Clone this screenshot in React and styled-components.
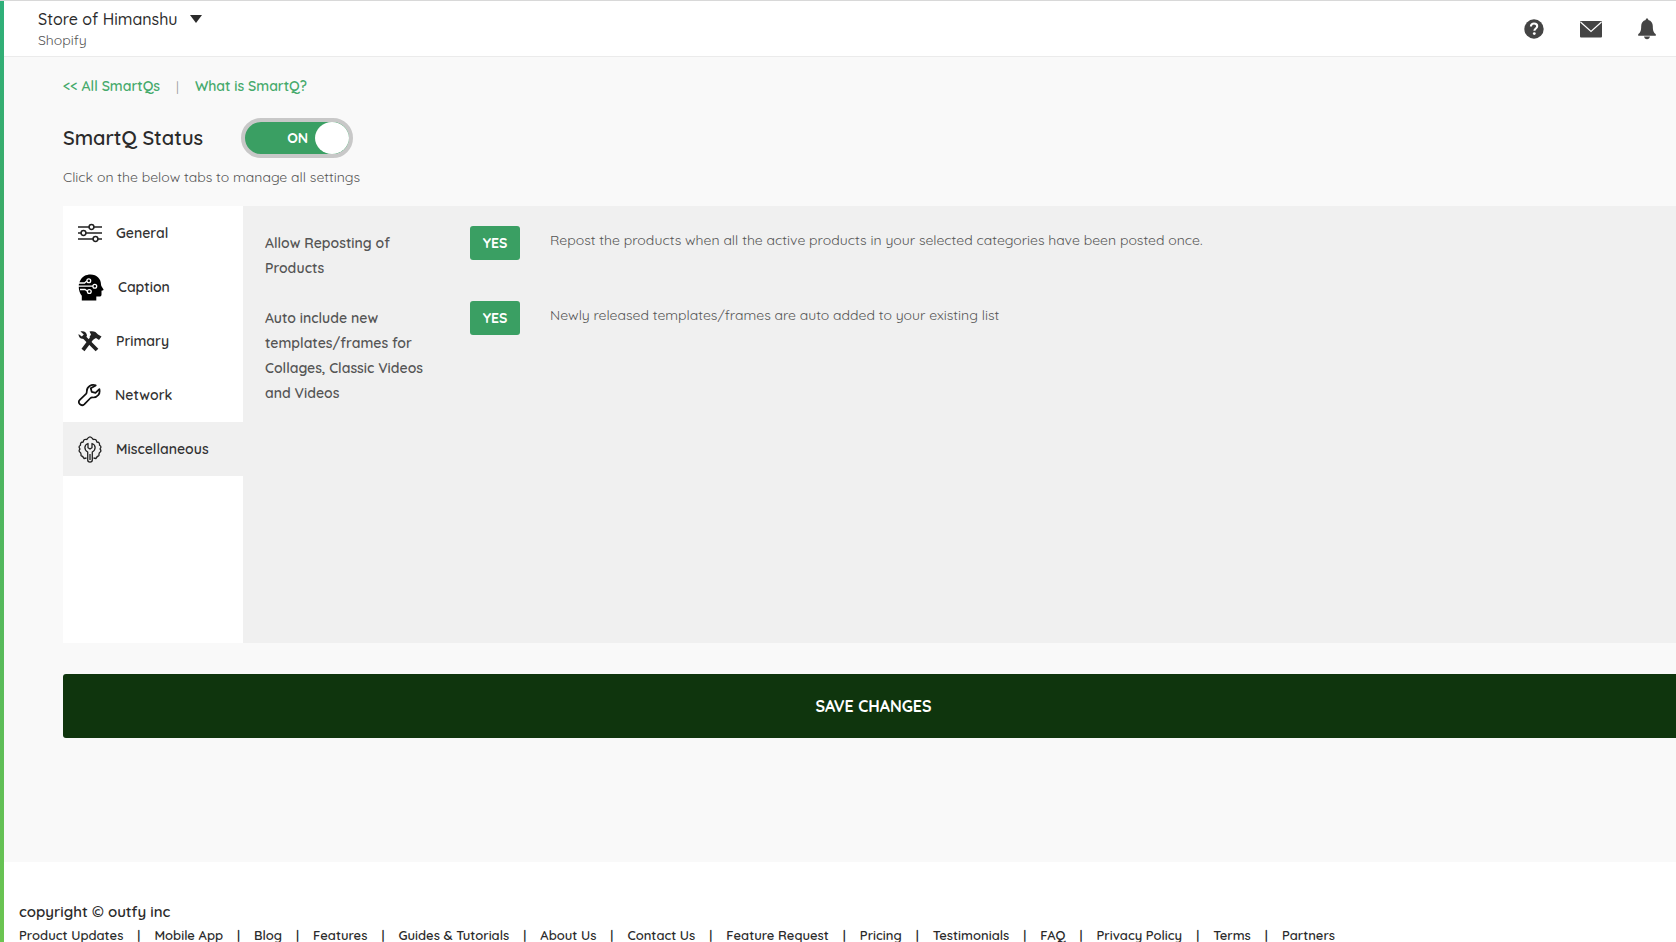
import React, { useState } from "react";
import styled, { createGlobalStyle, css } from "styled-components";

const GlobalStyle = createGlobalStyle`
  * {
    box-sizing: border-box;
  }

  body {
    margin: 0;
    background: #ffffff;
    color: #2b2b2b;
    font-family: Quicksand, "Open Sans", sans-serif;
    font-size: 14px;
  }

  button {
    font-family: inherit;
    cursor: pointer;
  }

  a {
    text-decoration: none;
  }
`;

const Layout = styled.div`
  display: flex;
  min-height: 100vh;
  border-top: 1px solid #d8d8d8;
  overflow: hidden;
`;

const SideStripe = styled.div`
  flex: 0 0 4px;
  background: linear-gradient(#2fb07a, #3bac69 22%, #6cc551);
`;

const Page = styled.div`
  flex: 1;
  min-width: 0;
  display: flex;
  flex-direction: column;
`;

const Header = styled.header`
  display: flex;
  justify-content: space-between;
  align-items: center;
  height: 56px;
  padding: 0 20px 0 34px;
  border-bottom: 1px solid #ebebeb;
  background: #ffffff;
`;

const StoreButton = styled.button`
  display: flex;
  flex-direction: column;
  align-items: flex-start;
  padding: 0;
  border: none;
  background: none;
  color: #2b2b2b;
`;

const StoreName = styled.span`
  display: flex;
  align-items: center;
  gap: 12px;
  font-size: 16px;
  font-weight: 500;
  line-height: 22px;
`;

const StorePlatform = styled.span`
  color: #555555;
  font-size: 14px;
  line-height: 20px;
`;

const HeaderActions = styled.div`
  display: flex;
  align-items: center;
  gap: 36px;
`;

const IconButton = styled.button`
  display: flex;
  padding: 0;
  border: none;
  background: none;
  color: #444444;
`;

const Main = styled.main`
  padding: 18px 0 124px 59px;
  background: #f9f9f9;
`;

/* the content runs slightly past the right edge of the window */
const Content = styled.form`
  margin-right: -8px;
`;

const TopLinks = styled.nav`
  display: flex;
  align-items: center;
  gap: 16px;
  color: #999999;
  line-height: 22px;
`;

const TopLink = styled.a`
  color: #46aa6c;
  font-weight: 600;
`;

const StatusRow = styled.div`
  display: flex;
  align-items: center;
  gap: 38px;
  margin-top: 21px;
`;

const Title = styled.h1`
  margin: 0;
  font-size: 20px;
  font-weight: 600;
  line-height: 28px;
`;

const Toggle = styled.label`
  display: flex;
  align-items: center;
  justify-content: flex-end;
  gap: 7px;
  width: 112px;
  height: 40px;
  border: 4px solid #c8c8c8;
  border-radius: 20px;
  background: #3a9f63;
  color: #ffffff;
  font-weight: 700;
  cursor: pointer;

  ${({ $on }) =>
    !$on &&
    css`
      flex-direction: row-reverse;
      background: #999999;
    `}
`;

const HiddenCheckbox = styled.input`
  appearance: none;
  width: 0;
  height: 0;
  margin: 0;
`;

const Knob = styled.span`
  width: 34px;
  height: 32px;
  border-radius: 50%;
  background: #ffffff;
`;

const Hint = styled.p`
  margin: 9px 0 19px;
  color: #555555;
  font-size: 14px;
  line-height: 20px;
`;

const Panel = styled.section`
  display: flex;
  min-height: 437px;
  background: #f0f0f0;
`;

const Tabs = styled.nav`
  flex: 0 0 180px;
  display: flex;
  flex-direction: column;
  background: #ffffff;
`;

const Tab = styled.button`
  display: flex;
  align-items: center;
  gap: 14px;
  height: 54px;
  padding: 0 15px;
  border: none;
  background: ${({ $active }) => ($active ? "#f0f0f0" : "#ffffff")};
  color: #333333;
  font-size: 14px;
  font-weight: 600;
`;

const Settings = styled.div`
  flex: 1;
  display: flex;
  flex-direction: column;
  gap: 20px;
  padding: 20px 22px;
`;

const Setting = styled.div`
  display: grid;
  grid-template-columns: 175px 50px 1fr;
  column-gap: 30px;
  align-items: start;
`;

const SettingLabel = styled.label`
  padding-top: 5px;
  color: #555555;
  font-weight: 600;
  line-height: 25px;
`;

const YesButton = styled.button`
  height: 34px;
  padding: 0;
  border: none;
  border-radius: 3px;
  background: #3a9f63;
  color: #ffffff;
  font-size: 14px;
  font-weight: 700;
`;

const Description = styled.p`
  margin: 0;
  padding-top: 4px;
  color: #555555;
  line-height: 20px;
`;

const SaveButton = styled.button`
  width: 100%;
  height: 64px;
  margin-top: 31px;
  border: none;
  border-radius: 3px;
  background: #0f350d;
  color: #ffffff;
  font-size: 16px;
  font-weight: 700;
`;

const Footer = styled.footer`
  padding: 38px 0 0 15px;
`;

const Copyright = styled.p`
  margin: 0;
  font-size: 15px;
  font-weight: 600;
  line-height: 24px;
`;

const FooterLinks = styled.ul`
  display: flex;
  margin: 0;
  padding: 0;
  list-style: none;
  line-height: 22px;
`;

const FooterItem = styled.li`
  font-size: 13px;
  font-weight: 600;
  white-space: nowrap;

  & + &::before {
    content: "|";
    margin: 0 14px;
  }
`;

const FooterLink = styled.a`
  color: #2b2b2b;
`;

const CaretIcon = () => (
  <svg width="12" height="8" viewBox="0 0 12 8">
    <path d="M0 0h12L6 8z" fill="currentColor" />
  </svg>
);

const HelpIcon = () => (
  <svg width="20" height="20" viewBox="0 0 20 20">
    <circle cx="10" cy="10" r="9.7" fill="currentColor" />
    <path
      d="M6.9 7.5c0-2 1.4-3 3.1-3s3.2 1 3.2 2.7c0 2.2-2.8 2.3-2.8 4.6"
      fill="none"
      stroke="#fff"
      strokeWidth="2.1"
    />
    <circle cx="10.3" cy="14.6" r="1.4" fill="#fff" />
  </svg>
);

const MailIcon = () => (
  <svg width="22" height="18" viewBox="0 0 22 18">
    <rect y="1" width="22" height="16.5" rx="1" fill="currentColor" />
    <path d="M.5 2L11 11.500 21.500 2" fill="none" stroke="#fff" strokeWidth="1.2" />
  </svg>
);

const BellIcon = () => (
  <svg width="18" height="22" viewBox="0 0 18 22">
    <path
      d="M9 .5c.8 0 1.300.5 1.300 1.400 2.900.7 4.500 3 4.500 6.100 0 4.500.8 6.500 3 8.300v1.500H.2v-1.500c2.200-1.800 3-3.800 3-8.300 0-3.100 1.600-5.400 4.500-6.100C7.700 1 8.200.5 9 .5z"
      fill="currentColor"
    />
    <path d="M6 18.600h6c-.3 1.700-1.400 2.600-3 2.600s-2.700-.9-3-2.600z" fill="currentColor" />
  </svg>
);

const SlidersIcon = () => (
  <svg width="24" height="20" viewBox="0 0 24 20" fill="none" stroke="#222" strokeWidth="1.500">
    <path d="M0 4h11M16 4h8M0 10h3M8 10h16M0 16h15M20 16h4" />
    <circle cx="13.500" cy="4" r="2.400" />
    <circle cx="5.500" cy="10" r="2.400" />
    <circle cx="17.500" cy="16" r="2.400" />
  </svg>
);

const HeadIcon = () => (
  <svg width="26" height="27" viewBox="0 0 26 27" fill="none">
    <path
      d="M2 7C4 2.500 8 .5 12.500.5 19 .5 23 5 23 10.500c0 1.200.5 2 2.500 5 .2.500 0 .9-2 1.200v3.800c0 1.500-.8 2-2 2h-3.200V26.500H3.800v-4.700C1 18.500-.5 11.500 2 7z"
      fill="#000"
    />
    <g stroke="#fff" strokeWidth="1.300">
      <path d="M1 9h5.500l2.300-2M0 12.200h15M2 15.500h5l2.500 1.800" />
      <circle cx="10.800" cy="6.800" r="1.900" />
      <circle cx="16.800" cy="12.200" r="1.900" />
      <circle cx="11.300" cy="17.500" r="1.900" />
    </g>
  </svg>
);

const ToolsIcon = () => (
  <svg width="24" height="22" viewBox="0 0 24 22" fill="none" stroke="#222">
    <path d="M5.500 6.500L19 20" strokeWidth="3.800" />
    <path d="M14 8L5 20" strokeWidth="3.800" />
    <path d="M2.500 1.500l3.300 3-2 2-3.300-2.500C.5 7.500 3 9.500 6.500 8.500L9 6C9 2.500 6 .5 2.500 1.500z" fill="#222" stroke="none" />
    <path d="M11.500 1.500c4-.9 6.500.3 8.500 3l3.500 2-2.500 3.500-3-2-3.500 2-3-3 1.500-2.500z" fill="#222" stroke="none" />
  </svg>
);

const WrenchIcon = () => (
  <svg width="23" height="24" viewBox="0 0 24 24" fill="none" stroke="#111" strokeWidth="1.800" strokeLinejoin="round">
    <path d="M18.500 2C14 .2 9.200 3.300 9.200 8c0 1.200 0 2-.8 2.900L1.900 17C-1 20 3.300 24.500 6.500 21.700l6.300-6.300c.8-.8 1.600-.9 2.700-.8 5 .2 8-4.100 6.800-8.800l-4 3.900-4-1-1-3.700z" />
  </svg>
);

const GearIcon = () => (
  <svg width="24" height="27" viewBox="0 0 24 27" fill="none" stroke="#222" strokeWidth="1.300" strokeLinejoin="round">
    <path d="M8.500 22l-2.500.5c-.7-1.900-1.100-2.500-3-3 .3-2 .2-2.600-1.200-3.500-1-1-.8-2 .2-3-1.200-1.700-1.500-2.500.5-3.700-.2-2 .3-3.300 2.700-3.300.3-2.200 1.200-3.200 3.500-2.500C9.800 2 10.800.8 12 .8s2.200 1.200 3.300 2.700c2.300-.7 3.200.3 3.500 2.500 2.400 0 2.900 1.300 2.700 3.300 2 1.200 1.700 2 .5 3.700 1 1 1.200 2 .2 3-1.400.9-1.500 1.500-1.200 3.500-1.900.5-2.300 1.100-3 3l-2.500-.5" />
    <path d="M10 7.500c-4 1.300-4.200 6.200-.3 8.500V24c0 2.700 4.600 2.700 4.600 0v-8c3.900-2.300 3.700-7.200-.3-8.500v4.200l-2 1.300-2-1.300zM12 18v6" />
  </svg>
);

const tabs = [
  { name: "General", icon: <SlidersIcon /> },
  { name: "Caption", icon: <HeadIcon /> },
  { name: "Primary", icon: <ToolsIcon /> },
  { name: "Network", icon: <WrenchIcon /> },
  { name: "Miscellaneous", icon: <GearIcon /> },
];

const settings = [
  {
    id: "repost",
    label: "Allow Reposting of Products",
    description:
      "Repost the products when all the active products in your selected categories have been posted once.",
  },
  {
    id: "auto-include",
    label: "Auto include new templates/frames for Collages, Classic Videos and Videos",
    description: "Newly released templates/frames are auto added to your existing list",
  },
];

const footerLinks = [
  "Product Updates",
  "Mobile App",
  "Blog",
  "Features",
  "Guides & Tutorials",
  "About Us",
  "Contact Us",
  "Feature Request",
  "Pricing",
  "Testimonials",
  "FAQ",
  "Privacy Policy",
  "Terms",
  "Partners",
];

const SettingRow = ({ id, label, description }) => {
  const [enabled, setEnabled] = useState(true);

  return (
    <Setting>
      <SettingLabel htmlFor={id}>{label}</SettingLabel>
      <YesButton id={id} type="button" aria-pressed={enabled} onClick={() => setEnabled(!enabled)}>
        {enabled ? "YES" : "NO"}
      </YesButton>
      <Description>{description}</Description>
    </Setting>
  );
};

const App = () => {
  const [isOn, setIsOn] = useState(true);
  const [activeTab, setActiveTab] = useState("Miscellaneous");

  return (
    <>
      <GlobalStyle />
      <Layout>
        <SideStripe />
        <Page>
          <Header>
            <StoreButton type="button">
              <StoreName>
                Store of Himanshu
                <CaretIcon />
              </StoreName>
              <StorePlatform>Shopify</StorePlatform>
            </StoreButton>
            <HeaderActions>
              <IconButton aria-label="Help">
                <HelpIcon />
              </IconButton>
              <IconButton aria-label="Messages">
                <MailIcon />
              </IconButton>
              <IconButton aria-label="Notifications">
                <BellIcon />
              </IconButton>
            </HeaderActions>
          </Header>
          <Main>
            <Content onSubmit={(e) => e.preventDefault()}>
              <TopLinks>
                <TopLink href="#smartqs">&lt;&lt; All SmartQs</TopLink>
                <span>|</span>
                <TopLink href="#what-is-smartq">What is SmartQ?</TopLink>
              </TopLinks>
              <StatusRow>
                <Title>SmartQ Status</Title>
                <Toggle $on={isOn}>
                  <HiddenCheckbox
                    type="checkbox"
                    aria-label="SmartQ Status"
                    checked={isOn}
                    onChange={() => setIsOn(!isOn)}
                  />
                  {isOn ? "ON" : "OFF"}
                  <Knob />
                </Toggle>
              </StatusRow>
              <Hint>Click on the below tabs to manage all settings</Hint>
              <Panel>
                <Tabs>
                  {tabs.map(({ name, icon }) => (
                    <Tab
                      key={name}
                      type="button"
                      $active={name === activeTab}
                      onClick={() => setActiveTab(name)}
                    >
                      {icon}
                      {name}
                    </Tab>
                  ))}
                </Tabs>
                <Settings>
                  {settings.map((setting) => (
                    <SettingRow key={setting.id} {...setting} />
                  ))}
                </Settings>
              </Panel>
              <SaveButton type="submit">SAVE CHANGES</SaveButton>
            </Content>
          </Main>
          <Footer>
            <Copyright>copyright © outfy inc</Copyright>
            <FooterLinks>
              {footerLinks.map((link) => (
                <FooterItem key={link}>
                  <FooterLink href="#footer">{link}</FooterLink>
                </FooterItem>
              ))}
            </FooterLinks>
          </Footer>
        </Page>
      </Layout>
    </>
  );
};

export default App;
